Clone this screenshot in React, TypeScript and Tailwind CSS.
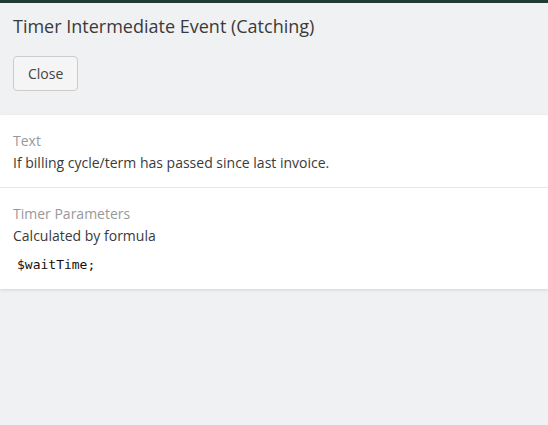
import React from "react";

export default function App() {
  return (
    <div className="min-h-[425px] w-full bg-[#f0f1f3]" style={{ fontFamily: '"Open Sans", sans-serif' }}>
      <div className="h-[3px] bg-[#203a34]" />
      <div className="px-[13px] pt-[10px]">
        <h1 className="text-[18px] leading-[26px] text-[#3a3a3a]">Timer Intermediate Event (Catching)</h1>
        <button className="mt-[17px] h-[35px] rounded-[4px] border border-[#ccc] bg-[#f5f5f5] px-[14px] text-[14px] text-[#444]">
          Close
        </button>
      </div>
      <div className="mt-[24px] bg-white shadow-[0_1px_3px_rgba(0,0,0,0.12)]">
        <div className="border-b border-[#e8e8e8] px-[13px] pt-[15px] pb-[13px]">
          <div className="text-[14px] leading-[22px] text-[#999]">Text</div>
          <div className="text-[14px] leading-[22px] text-[#3a3a3a]">If billing cycle/term has passed since last invoice.</div>
        </div>
        <div className="px-[13px] pt-[15px] pb-[14px]">
          <div className="text-[14px] leading-[22px] text-[#999]">Timer Parameters</div>
          <div className="text-[14px] leading-[22px] text-[#3a3a3a]">Calculated by formula</div>
          <div className="mt-[8px] pl-[4px] text-[13px] leading-[20px] text-[#111]" style={{ fontFamily: '"DejaVu Sans Mono", monospace' }}>
            $waitTime;
          </div>
        </div>
      </div>
    </div>
  );
}
